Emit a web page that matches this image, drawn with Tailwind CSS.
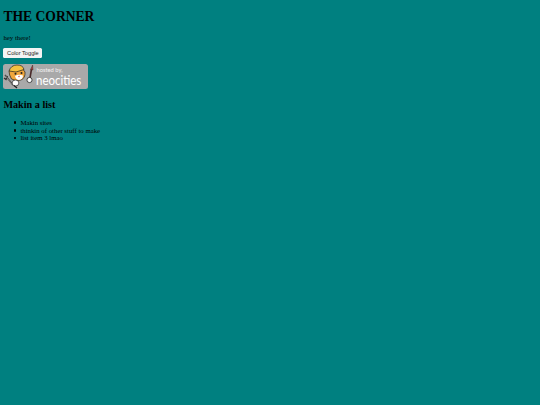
<!DOCTYPE html>
<html lang="en">
<head>
    <meta charset="UTF-8">
    <meta name="viewport" content="width=device-width, initial-scale=1.0">
    <title>THE CORNER</title>
    <script src="https://cdn.jsdelivr.net/npm/@tailwindcss/browser@4"></script>
</head>
<body class="min-h-screen bg-[#008080] text-black pl-[3.4px] pt-[9.1px] font-['Liberation_Serif',serif] text-[6.8px] leading-[7.7px]">

    <h1 class="text-[13.6px] leading-[15.6px] font-bold mb-[9.1px]">THE CORNER</h1>

    <p class="mb-[6.8px]">hey there!</p>

    <button class="block w-[39px] h-[9.5px] bg-[#f4f4f4] rounded-[1.5px] font-['Liberation_Sans',sans-serif] text-[5.67px] leading-[8px] text-center text-[#222]">Color Toggle</button>

    <!-- neocities badge -->
    <div class="relative w-[85px] h-[25px] mt-[6.2px] bg-[#a9a9a9] rounded-[2.5px] overflow-hidden">
        <svg class="absolute left-0 top-0" width="34" height="25" viewBox="0 0 34 25">
            <!-- wrench -->
            <path d="M2 11 L10 21 M1 14 L3 15.5 L4.5 12" stroke="#333" stroke-width="1.3" fill="none"/>
            <path d="M2.2 11.5 L9 20" stroke="#ccc" stroke-width="0.5" fill="none"/>
            <!-- cat head -->
            <path d="M6 7 L8 5 L19 4 L22 8 Q22.5 14 18 16 Q12 17.5 8.5 15 Q6 11 6 7 Z" fill="#f0a63c" stroke="#222" stroke-width="0.7"/>
            <!-- hard hat -->
            <path d="M6 7 Q8 1 14 1 Q20 1 21 5.5 L13 8 Z" fill="#f5c040" stroke="#222" stroke-width="0.7"/>
            <path d="M12 12 Q15.5 10 20 11.5 Q20 15.5 16 16 Q13 16 12 12 Z" fill="#fff"/>
            <circle cx="12.5" cy="9.8" r="1" fill="#222"/>
            <circle cx="18.5" cy="9" r="1" fill="#222"/>
            <path d="M15 12 L17 11.8 L16 13.4 Z" fill="#c8453a"/>
            <!-- body -->
            <ellipse cx="12.5" cy="19" rx="3.4" ry="3" fill="#fff" stroke="#222" stroke-width="0.7"/>
            <path d="M11 21.5 L14 24" stroke="#222" stroke-width="1.2"/>
            <!-- paint brush -->
            <path d="M28.5 5 L27 14" stroke="#4a2a2a" stroke-width="1.6"/>
            <path d="M27.7 5.5 L29.6 1 L30 6 Z" fill="#b8403a" stroke="#222" stroke-width="0.4"/>
            <circle cx="26.5" cy="16" r="2.6" fill="#fff" stroke="#222" stroke-width="0.8"/>
        </svg>
        <span class="absolute left-[33px] top-[3.5px] font-['Lato',sans-serif] text-[5.8px] leading-[6.5px] text-[#f2f2f2] whitespace-nowrap">hosted by,</span>
        <span class="absolute left-[32.5px] top-[10px] origin-left scale-x-[.82] font-['Lato',sans-serif] text-[14px] leading-[11px] text-white whitespace-nowrap">neocities</span>
    </div>

    <h2 class="text-[10.2px] leading-[11.7px] font-bold mt-[10px] mb-[8.2px]">Makin a list</h2>

    <ul class="pl-[17px]">
        <li class="relative before:absolute before:left-[-6.5px] before:top-[2.6px] before:w-[2.4px] before:h-[2.4px] before:rounded-full before:bg-black">Makin sites</li>
        <li class="relative before:absolute before:left-[-6.5px] before:top-[2.6px] before:w-[2.4px] before:h-[2.4px] before:rounded-full before:bg-black">thinkin of other stuff to make</li>
        <li class="relative before:absolute before:left-[-6.5px] before:top-[2.6px] before:w-[2.4px] before:h-[2.4px] before:rounded-full before:bg-black">list item 3 lmao</li>
    </ul>

</body>
</html>
